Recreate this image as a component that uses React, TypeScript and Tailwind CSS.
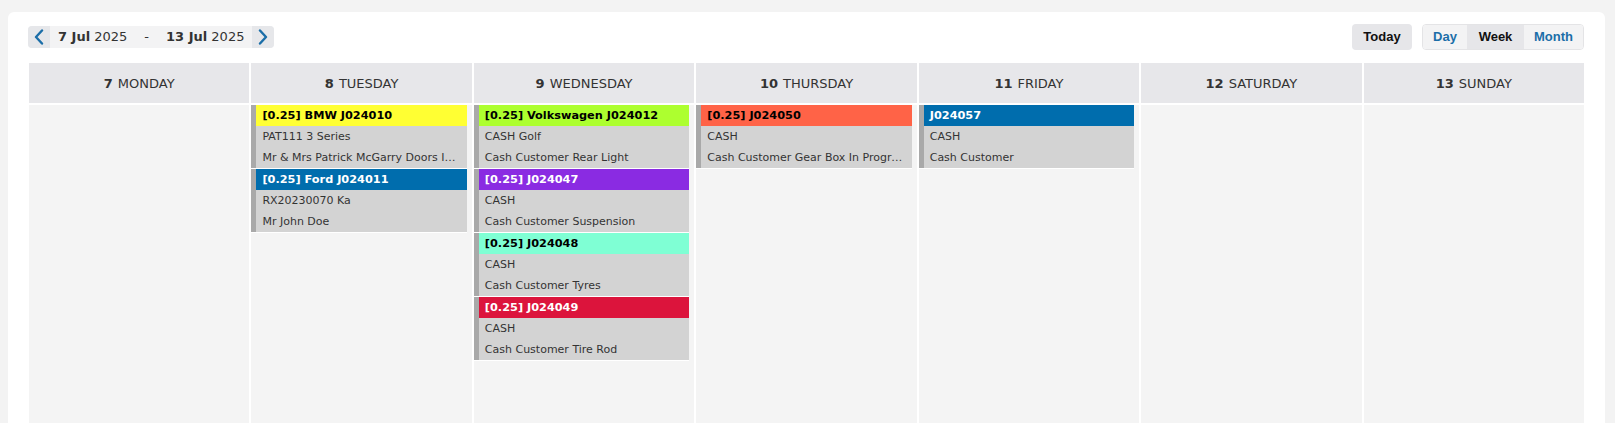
const days = [
  { n: 7, name: "MONDAY" },
  { n: 8, name: "TUESDAY" },
  { n: 9, name: "WEDNESDAY" },
  { n: 10, name: "THURSDAY" },
  { n: 11, name: "FRIDAY" },
  { n: 12, name: "SATURDAY" },
  { n: 13, name: "SUNDAY" },
];

type Job = { title: string; bg: string; fg: string; lines: string[] };

const jobs: Record<number, Job[]> = {
  8: [
    { title: "[0.25] BMW J024010", bg: "bg-[#ffff33]", fg: "text-black", lines: ["PAT111 3 Series", "Mr & Mrs Patrick McGarry Doors Installation"] },
    { title: "[0.25] Ford J024011", bg: "bg-[#006dad]", fg: "text-white", lines: ["RX20230070 Ka", "Mr John Doe"] },
  ],
  9: [
    { title: "[0.25] Volkswagen J024012", bg: "bg-[#adff2f]", fg: "text-black", lines: ["CASH Golf", "Cash Customer Rear Light"] },
    { title: "[0.25] J024047", bg: "bg-[#8a2be2]", fg: "text-white", lines: ["CASH", "Cash Customer Suspension"] },
    { title: "[0.25] J024048", bg: "bg-[#7fffd4]", fg: "text-black", lines: ["CASH", "Cash Customer Tyres"] },
    { title: "[0.25] J024049", bg: "bg-[#dc143c]", fg: "text-white", lines: ["CASH", "Cash Customer Tire Rod"] },
  ],
  10: [
    { title: "[0.25] J024050", bg: "bg-[#ff6347]", fg: "text-black", lines: ["CASH", "Cash Customer Gear Box In Progress"] },
  ],
  11: [
    { title: "J024057", bg: "bg-[#006dad]", fg: "text-white", lines: ["CASH", "Cash Customer"] },
  ],
};

function Chevron({ left }: { left?: boolean }) {
  return (
    <svg width="10" height="16" viewBox="0 0 10 16" fill="none" stroke="#1b6ea8" strokeWidth="2.4" strokeLinecap="round" strokeLinejoin="round">
      <path d={left ? "M8 1.5L2 8l6 6.5" : "M2 1.5L8 8l-6 6.5"} />
    </svg>
  );
}

function JobCard({ job }: { job: Job }) {
  return (
    <div className="flex border-b border-white mr-[5px]">
      <div className="w-[5px] shrink-0 bg-[#a9a9a9]" />
      <div className="flex-1 min-w-0">
        <div className={`${job.bg} ${job.fg} h-[21px] leading-[22px] px-[6px] text-[11.3px] font-bold truncate`}>
          {job.title}
        </div>
        {job.lines.map((l) => (
          <div key={l} className="bg-[#d3d3d3] h-[21px] leading-[22px] px-[6px] text-[11px] text-[#333] truncate">
            {l}
          </div>
        ))}
      </div>
    </div>
  );
}

export default function App() {
  return (
    <div className="h-[423px] overflow-hidden bg-[#f3f3f3] pl-[8px] pr-[10px] pt-[12px] font-['DejaVu_Sans',Verdana,sans-serif] text-[#333]">
      <div className="bg-white rounded-[6px] px-[21px] pt-[12px] h-[460px]">
        {/* toolbar */}
        <div className="flex items-center justify-between h-[26px]">
          <div className="-ml-px flex items-center h-[22px] rounded-[4px] overflow-hidden bg-[#f3f3f4] text-[13px]">
            <button className="w-[22px] h-full flex items-center justify-center bg-[#e6e7ea]">
              <Chevron left />
            </button>
            <div className="px-[8px] whitespace-pre">
              <b>7 Jul</b> 2025<span className="mx-[17px]">-</span><b>13 Jul</b> 2025
            </div>
            <button className="w-[22px] h-full flex items-center justify-center bg-[#e6e7ea]">
              <Chevron />
            </button>
          </div>
          <div className="flex items-center gap-[10px] font-['Liberation_Sans',Arial,sans-serif] text-[13px] font-bold">
            <button className="h-[26px] w-[60px] rounded-[4px] bg-[#e6e6e9] text-[#111]">Today</button>
            <div className="flex h-[26px] rounded-[4px] border border-[#e4e4e6] overflow-hidden">
              <button className="w-[44px] bg-[#f3f3f4] text-[#1b6ea8]">Day</button>
              <button className="w-[57px] bg-[#e6e6e9] text-[#111]">Week</button>
              <button className="flex-1 w-[59px] bg-[#f3f3f4] text-[#1b6ea8]">Month</button>
            </div>
          </div>
        </div>

        {/* week grid */}
        <div className="mt-[13px] grid grid-cols-7 gap-x-[2px] gap-y-[2px]">
          {days.map((d) => (
            <div key={d.n} className="h-[40px] pt-px bg-[#e7e7ea] flex items-center justify-center text-[13px] text-[#333]">
              <b className="mr-[5px]">{d.n}</b>
              {d.name}
            </div>
          ))}
          {days.map((d) => (
            <div key={d.n} className="h-[340px] bg-[#f4f4f4]">
              {(jobs[d.n] || []).map((j) => (
                <JobCard key={j.title} job={j} />
              ))}
            </div>
          ))}
        </div>
      </div>
    </div>
  );
}
